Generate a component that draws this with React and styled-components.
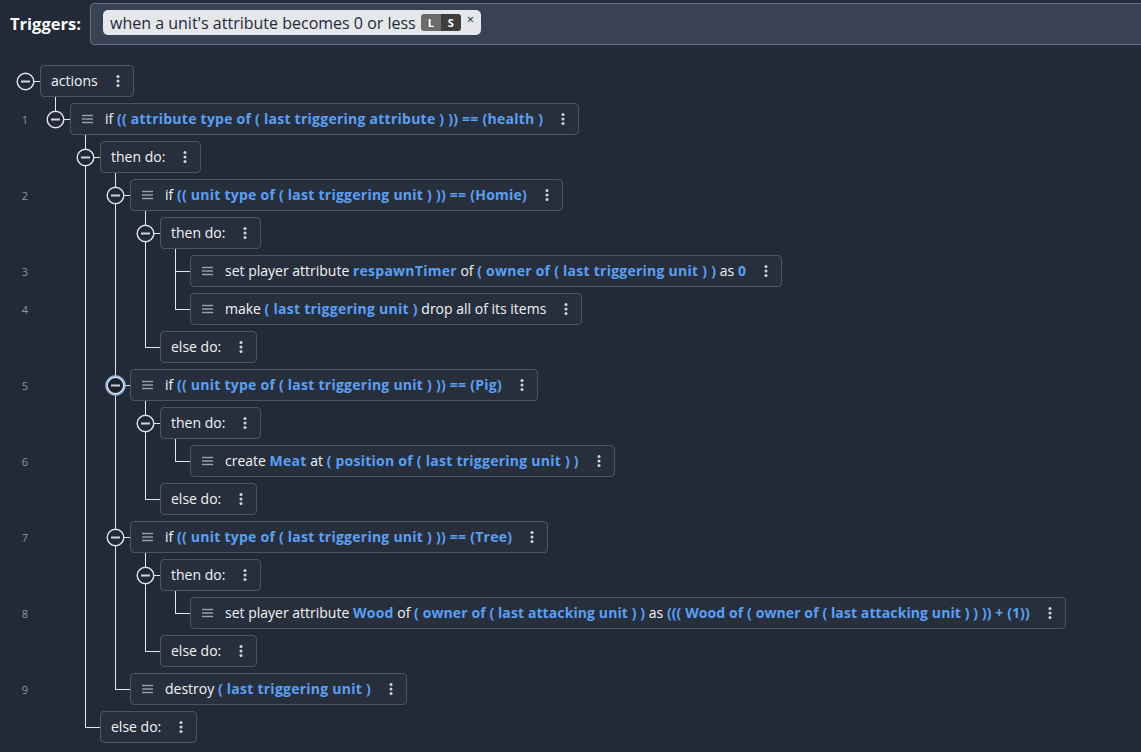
import React from "react";
import styled, { createGlobalStyle } from "styled-components";

const GlobalStyle = createGlobalStyle`
  html, body {
    margin: 0;
    padding: 0;
    background: #222937;
  }
  body {
    font-family: "Open Sans", "Liberation Sans", sans-serif;
    color: #f3f4f6;
  }
`;

const Page = styled.div`
  width: 1141px;
  height: 752px;
  overflow: hidden;
  background: #222937;
`;

const TopBar = styled.div`
  display: flex;
  align-items: center;
  padding: 3px 0 0 10px;
`;

const BarLabel = styled.div`
  width: 80px;
  font-size: 16.5px;
  font-weight: 700;
  color: #f9fafb;
  margin-top: -2px;
`;

const TriggerInput = styled.div`
  flex: 1;
  height: 42px;
  box-sizing: border-box;
  margin-right: -6px;
  display: flex;
  align-items: flex-start;
  padding: 6px 0 0 12px;
  background: #394253;
  border: 1px solid #687284;
  border-radius: 4px;
`;

const Chip = styled.div`
  display: flex;
  align-items: center;
  height: 25px;
  padding: 0 7px;
  border-radius: 5px;
  background: #e5e7eb;
  color: #1f2937;
  font-size: 16px;
`;

const Badges = styled.div`
  display: flex;
  margin-left: 5px;
  border-radius: 3px;
  overflow: hidden;
`;

const Badge = styled.span`
  width: 20px;
  height: 17px;
  display: flex;
  align-items: center;
  justify-content: center;
  font-size: 11px;
  font-weight: 700;
  color: #fff;
  background: ${(p) => p.$tone};
`;

const Close = styled.span`
  margin-left: 6px;
  font-size: 13px;
  line-height: 1;
  margin-top: -6px;
  color: #1f2937;
`;

const Tree = styled.div`
  margin-top: 17px;
  padding-left: 10px;
`;

const Row = styled.div`
  display: flex;
  align-items: flex-start;
  height: 38px;
`;

const NumCell = styled.div`
  width: 30px;
  height: 38px;
  flex-shrink: 0;
  display: flex;
  align-items: center;
  justify-content: center;
  font-size: 11px;
  color: #8e96a3;
`;

const GuideSvg = styled.svg`
  display: block;
  flex-shrink: 0;
`;

const BoxColumn = styled.div`
  display: flex;
  flex-direction: column;
  padding-top: 3px;
`;

const Box = styled.div`
  display: inline-flex;
  align-items: center;
  height: 32px;
  box-sizing: border-box;
  padding: 0 9px 0 ${(p) => (p.$stmt ? 11 : 10)}px;
  background: #272f3c;
  border: 1px solid #4d5564;
  border-radius: 4px;
  font-size: 14px;
  white-space: nowrap;
  color: #f3f4f6;
`;

const Stem = styled.div`
  width: 1px;
  height: 3px;
  margin-left: 15px;
  background: #e5e7eb;
`;

const Text = styled.span`
  display: inline-block;
  line-height: 18px;
  margin-top: -1px;
`;

const Val = styled.span`
  color: #5b9ff3;
  font-weight: 700;
  letter-spacing: ${(p) => (p.$tight ? 0.1 : 0.25)}px;
`;

const Kebab = styled.svg`
  margin-left: 14px;
  flex-shrink: 0;
`;

const Handle = styled.svg`
  margin-right: 12px;
  flex-shrink: 0;
`;

const v = (t, tight) => ({ t, v: true, tight });

const tree = {
  label: "actions",
  children: [
    {
      n: 1,
      stmt: ["if ", v("(( attribute type of ( last triggering attribute ) )) == (health )")],
      children: [
        {
          label: "then do:",
          children: [
            {
              n: 2,
              stmt: ["if ", v("(( unit type of ( last triggering unit ) )) == (Homie)")],
              children: [
                {
                  label: "then do:",
                  children: [
                    {
                      n: 3,
                      stmt: [
                        "set player attribute ",
                        v("respawnTimer"),
                        " of ",
                        v("( owner of ( last triggering unit ) )"),
                        " as ",
                        v("0"),
                      ],
                    },
                    {
                      n: 4,
                      stmt: ["make ", v("( last triggering unit )"), " drop all of its items"],
                    },
                  ],
                },
                { label: "else do:" },
              ],
            },
            {
              n: 5,
              hover: true,
              stmt: ["if ", v("(( unit type of ( last triggering unit ) )) == (Pig)")],
              children: [
                {
                  label: "then do:",
                  children: [
                    {
                      n: 6,
                      stmt: [
                        "create ",
                        v("Meat"),
                        " at ",
                        v("( position of ( last triggering unit ) )"),
                      ],
                    },
                  ],
                },
                { label: "else do:" },
              ],
            },
            {
              n: 7,
              stmt: ["if ", v("(( unit type of ( last triggering unit ) )) == (Tree)")],
              children: [
                {
                  label: "then do:",
                  children: [
                    {
                      n: 8,
                      stmt: [
                        "set player attribute ",
                        v("Wood"),
                        " of ",
                        v("( owner of ( last attacking unit ) )", true),
                        " as ",
                        v("((( Wood of ( owner of ( last attacking unit ) ) )) + (1))", true),
                      ],
                    },
                  ],
                },
                { label: "else do:" },
              ],
            },
            { n: 9, stmt: ["destroy ", v("( last triggering unit )")] },
          ],
        },
        { label: "else do:" },
      ],
    },
  ],
};

function flatten(node, depth, cont, isLast, out) {
  out.push({ node, depth, cont, isLast });
  const kids = node.children || [];
  kids.forEach((k, i) =>
    flatten(k, depth + 1, [...cont, !isLast], i === kids.length - 1, out)
  );
  return out;
}

const LINE = "#e5e7eb";

function Guide({ pass, own, circle, top, bottom, hover }) {
  return (
    <GuideSvg width="30" height="38" viewBox="0 0 30 38">
      {pass && <line x1="15.5" y1="0" x2="15.5" y2="38" stroke={LINE} strokeWidth="1" />}
      {own && top && (
        <line x1="15.5" y1="0" x2="15.5" y2={circle ? 11 : 20} stroke={LINE} strokeWidth="1" />
      )}
      {own && bottom && (
        <line x1="15.5" y1={circle ? 28 : 19} x2="15.5" y2="38" stroke={LINE} strokeWidth="1" />
      )}
      {own && (
        <line x1={circle ? 24 : 15.5} y1="19.5" x2="30" y2="19.5" stroke={LINE} strokeWidth="1" />
      )}
      {own && circle && (
        <>
          {hover && <circle cx="15.5" cy="19.5" r="9.6" fill="none" stroke="#86b3e6" strokeWidth="1.6" />}
          <circle
            cx="15.5"
            cy="19.5"
            r="8.3"
            fill={hover ? "#1b2331" : "#222937"}
            stroke={LINE}
            strokeWidth="1.4"
          />
          <line x1="11" y1="19.5" x2="20" y2="19.5" stroke="#d1d5db" strokeWidth="2" />
        </>
      )}
    </GuideSvg>
  );
}

function Dots() {
  return (
    <Kebab width="12" height="14" viewBox="0 0 12 14">
      <circle cx="6" cy="2.5" r="1.5" fill="#d1d5db" />
      <circle cx="6" cy="7" r="1.5" fill="#d1d5db" />
      <circle cx="6" cy="11.5" r="1.5" fill="#d1d5db" />
    </Kebab>
  );
}

function Hamburger() {
  return (
    <Handle width="11" height="10" viewBox="0 0 11 10">
      <line x1="0" y1="1.5" x2="11" y2="1.5" stroke="#9ca3af" strokeWidth="1.4" />
      <line x1="0" y1="5" x2="11" y2="5" stroke="#9ca3af" strokeWidth="1.4" />
      <line x1="0" y1="8.5" x2="11" y2="8.5" stroke="#9ca3af" strokeWidth="1.4" />
    </Handle>
  );
}

function TreeRow({ node, depth, cont, isLast }) {
  const hasKids = !!(node.children && node.children.length);
  const cells = [];
  if (depth === 0) {
    cells.push(<Guide key="own" own circle={hasKids} hover={node.hover} />);
  } else {
    cells.push(<NumCell key="num">{node.n || ""}</NumCell>);
    for (let j = 1; j < depth; j++) {
      cells.push(<Guide key={j} pass={cont[j]} />);
    }
    cells.push(
      <Guide key="own" own circle={hasKids} top bottom={!isLast} hover={node.hover} />
    );
  }
  return (
    <Row>
      {cells}
      <BoxColumn>
        <Box $stmt={!!node.stmt}>
          {node.stmt && <Hamburger />}
          <Text>
            {node.stmt
              ? node.stmt.map((s, i) =>
                  typeof s === "string" ? (
                    <span key={i}>{s}</span>
                  ) : (
                    <Val key={i} $tight={s.tight}>
                      {s.t}
                    </Val>
                  )
                )
              : node.label}
          </Text>
          <Dots />
        </Box>
        {hasKids && <Stem />}
      </BoxColumn>
    </Row>
  );
}

export default function App() {
  const rows = flatten(tree, 0, [], true, []);
  return (
    <Page>
      <GlobalStyle />
      <TopBar>
        <BarLabel>Triggers:</BarLabel>
        <TriggerInput>
          <Chip>
            when a unit's attribute becomes 0 or less
            <Badges>
              <Badge $tone="#6b6b6b">L</Badge>
              <Badge $tone="#3d3d3d">S</Badge>
            </Badges>
            <Close>×</Close>
          </Chip>
        </TriggerInput>
      </TopBar>
      <Tree>
        {rows.map((r, i) => (
          <TreeRow key={i} {...r} />
        ))}
      </Tree>
    </Page>
  );
}
